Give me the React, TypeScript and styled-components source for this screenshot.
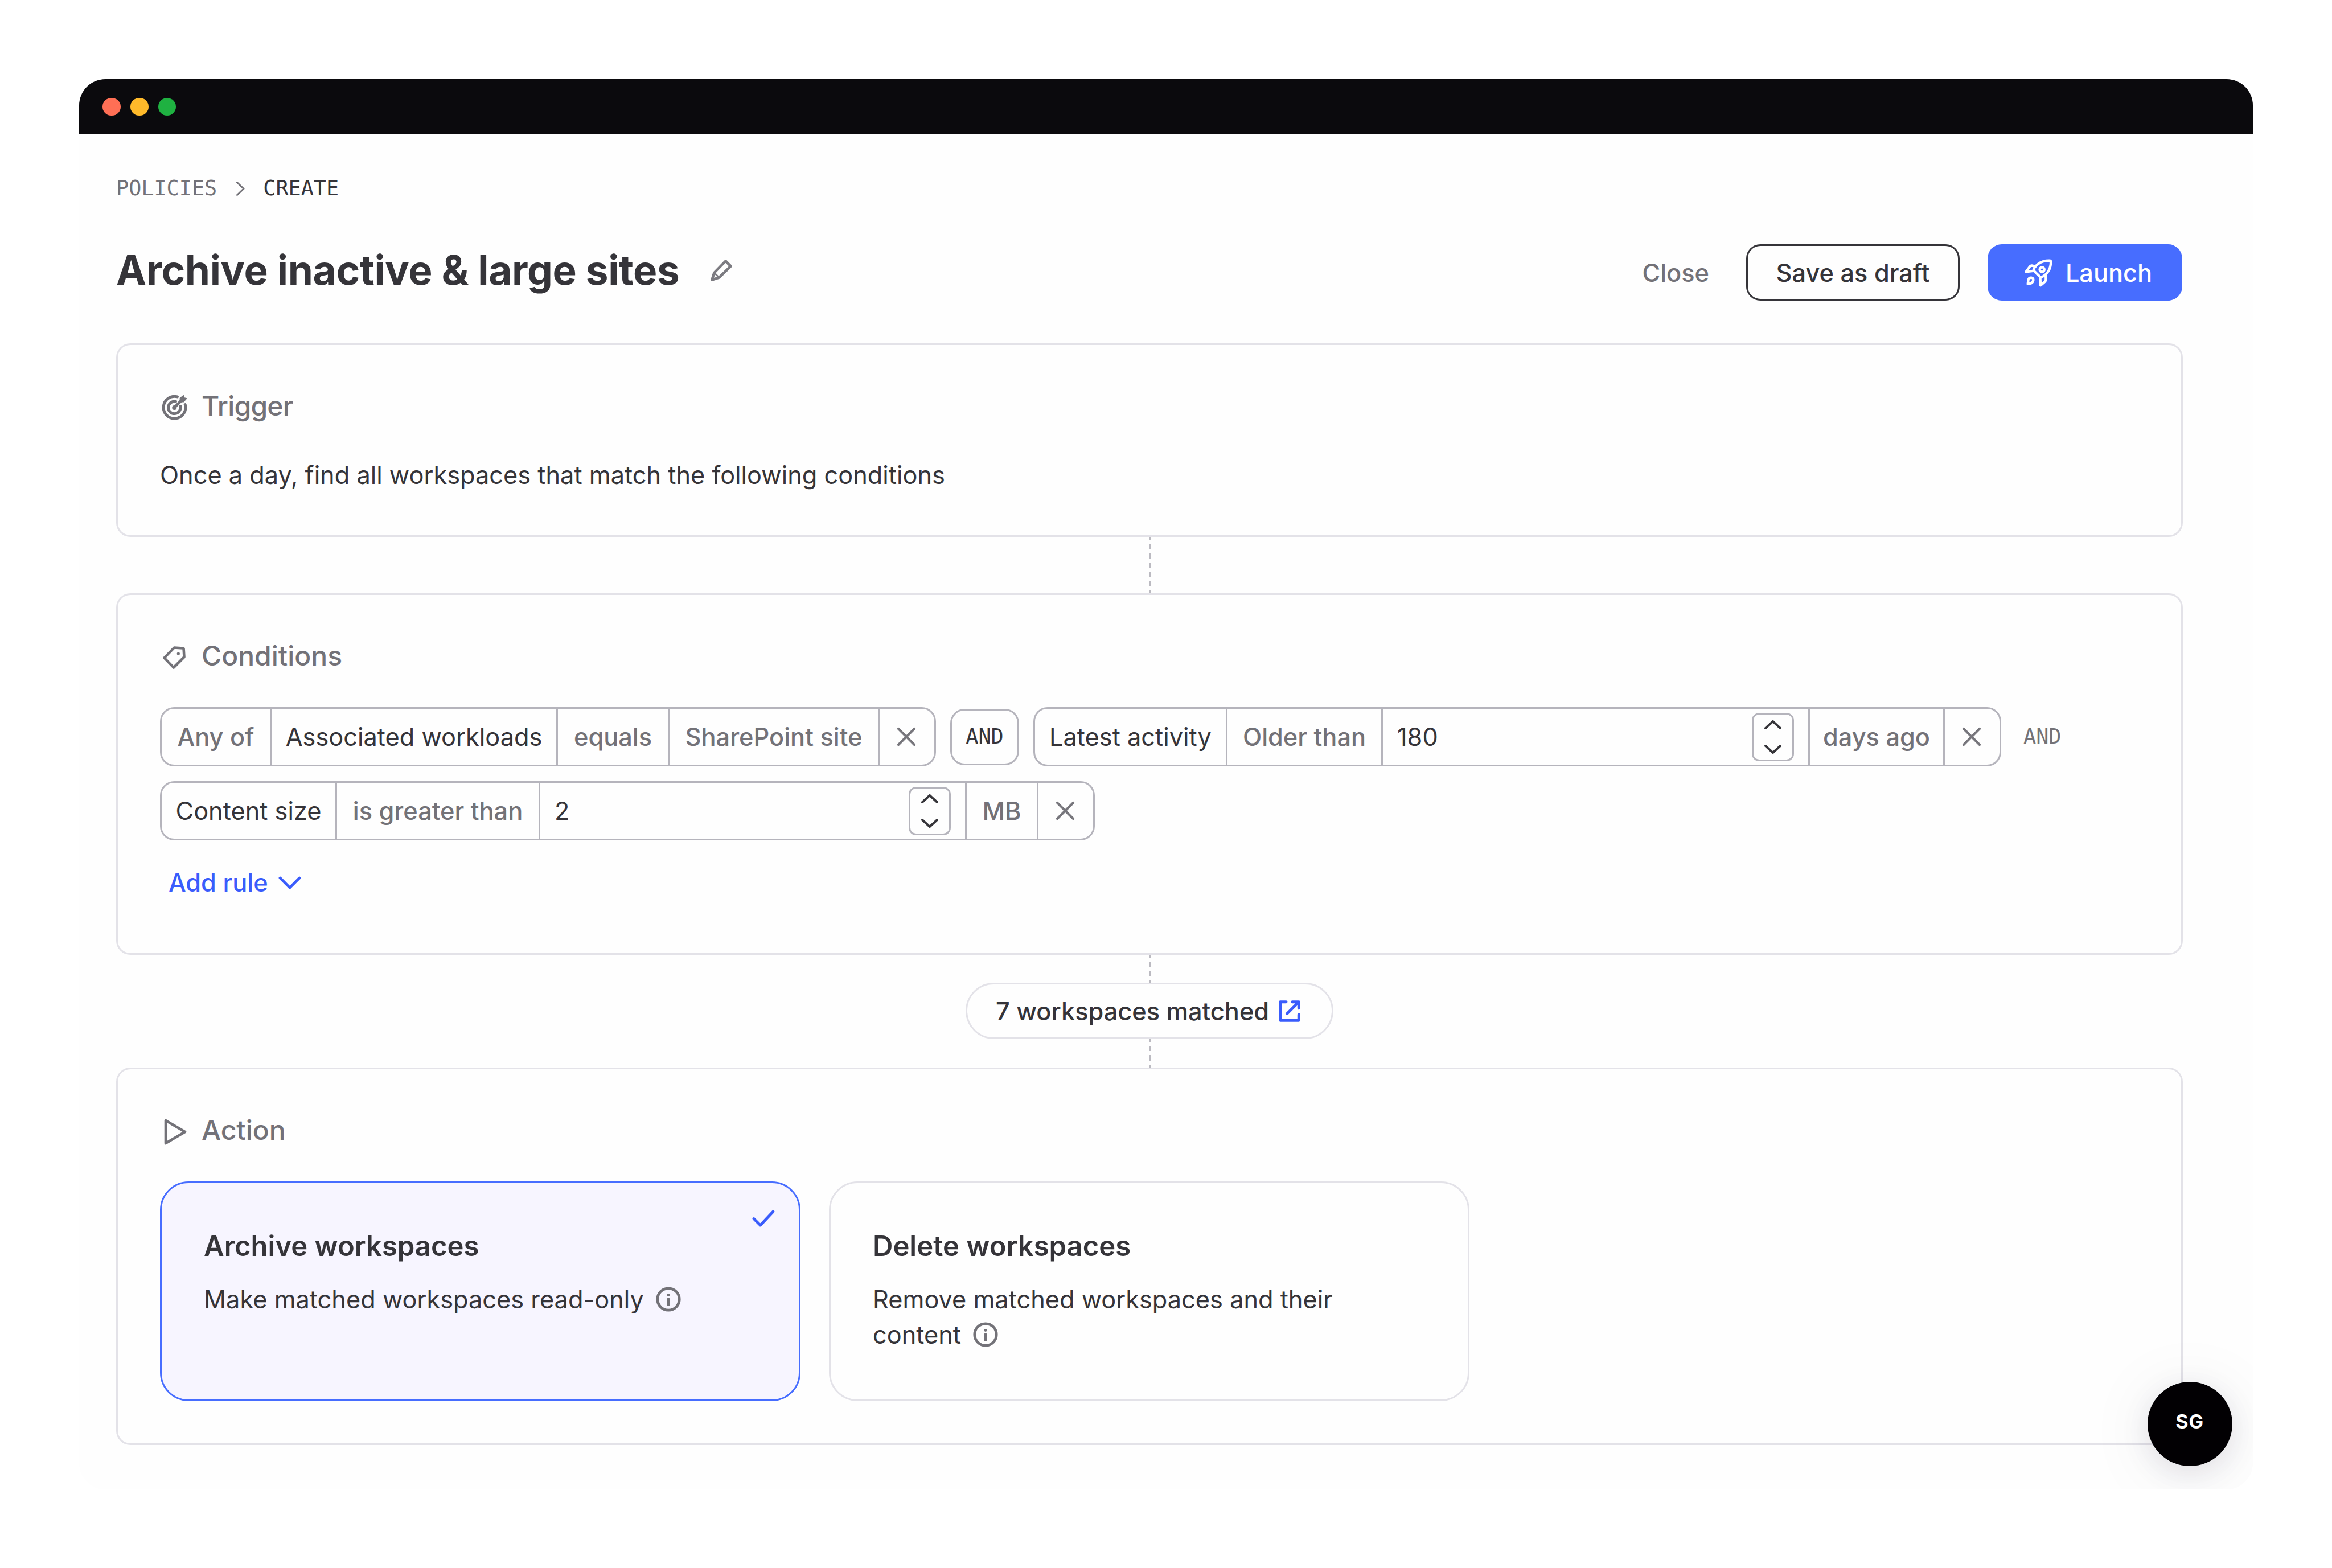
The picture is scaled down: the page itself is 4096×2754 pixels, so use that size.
import React from "react";
import styled, { createGlobalStyle, css } from "styled-components";

const ink = "#353439";
const muted = "#737278";
const blue = "#476dff";
const link = "#3a5cfc";
const line = "#e3e2e8";
const edge = "#b5b4bc";

const GlobalStyle = createGlobalStyle`
  * { box-sizing: border-box; }
  html, body { margin: 0; background: #fff; }
  body {
    font-family: Inter, "Liberation Sans", sans-serif;
    font-size: 43.3px;
    line-height: 62px;
    color: ${ink};
  }
  svg { display: block; flex: none; }
  button { font: inherit; color: inherit; background: none; border: 0; padding: 0; letter-spacing: inherit; }
  h1, h2, h3, p { margin: 0; font-weight: inherit; }
`;

const Stage = styled.div`
  width: 4096px;
  height: 2754px;
  padding: 139px;
  background: #fff;
`;

const Window = styled.div`
  position: relative;
  width: 3818px;
  height: 2477px;
  border-radius: 46px;
  overflow: hidden;
  background: #fefefe;
`;

const TitleBar = styled.div`
  display: flex;
  align-items: center;
  gap: 17.4px;
  height: 97px;
  padding-left: 41.4px;
  background: #0b0a0d;
`;

const Dot = styled.i<{ $color: string }>`
  width: 31.4px;
  height: 31.4px;
  border-radius: 50%;
  background: ${(p) => p.$color};
`;

const Page = styled.main`
  display: flex;
  flex-direction: column;
  width: 3695px;
  padding: 64px 0 0 65px;
`;

const mono = css`
  font-family: "DejaVu Sans Mono", "Liberation Mono", monospace;
  font-size: 36.8px;
`;

const Breadcrumbs = styled.nav`
  ${mono}
  display: flex;
  align-items: center;
  height: 62px;
  color: ${muted};
  svg { margin: 0 32px 0 34px; }
`;

const Current = styled.span`
  color: ${ink};
`;

const Header = styled.header`
  display: flex;
  align-items: center;
  height: 99px;
  margin: 67px 0 75px;
`;

const Title = styled.h1`
  font-size: 71px;
  font-weight: 650;
  letter-spacing: -0.37px;
  line-height: 86px;
  margin-top: -9px;
  white-space: nowrap;
`;

const EditButton = styled.button`
  margin: -7px 0 0 55px;
`;

const Actions = styled.div`
  display: flex;
  margin: 0 1px 0 auto;
  font-weight: 500;
`;

const Button = styled.button<{ $kind: "plain" | "outline" | "primary" }>`
  display: flex;
  align-items: center;
  justify-content: center;
  height: 99px;
  border-radius: 25px;
  white-space: nowrap;
  ${(p) =>
    p.$kind === "plain"
      ? css`color: ${muted}; margin-right: 65px;`
      : p.$kind === "outline"
      ? css`width: 375px; border: 3px solid ${ink}; margin-right: 49px;`
      : css`width: 342px; background: ${blue}; color: #fff; gap: 23px; padding-left: 11px;`}
`;

const Card = styled.section<{ $height: number }>`
  height: ${(p) => p.$height}px;
  padding: 74px;
  border: 3px solid ${line};
  border-radius: 25px;
`;

const CardHeader = styled.h2<{ $tracking?: number }>`
  display: flex;
  align-items: center;
  height: 62px;
  padding-top: 4px;
  margin-bottom: 61px;
  font-size: 48px;
  font-weight: 500;
  letter-spacing: ${(p) => p.$tracking ?? 0}px;
  color: ${muted};
`;

const IconSlot = styled.span`
  display: flex;
  align-items: center;
  justify-content: center;
  width: 50px;
  margin-right: 23px;
  padding-top: 5px;
`;

const Connector = styled.div<{ $length: number }>`
  align-self: center;
  width: 3px;
  height: ${(p) => p.$length}px;
  background: repeating-linear-gradient(
    #bbbac1 0 4.6px,
    transparent 4.6px 11.9px,
    #bbbac1 11.9px 16.5px
  );
`;

const Rules = styled.div`
  display: flex;
  flex-wrap: wrap;
  align-items: center;
  gap: 26px 25px;
`;

const Rule = styled.div`
  display: flex;
  height: 104px;
  border: 3px solid ${edge};
  border-radius: 25px;
`;

const Cell = styled.div<{ $width: number; $strong?: boolean }>`
  display: flex;
  align-items: center;
  justify-content: center;
  width: ${(p) => p.$width}px;
  color: ${(p) => (p.$strong ? ink : muted)};
  font-weight: ${(p) => (p.$strong ? 400 : 500)};
  border-right: 3px solid ${edge};
  white-space: nowrap;
  &:last-child { border-right: 0; padding-right: 3px; }
`;

const NumberCell = styled(Cell)`
  justify-content: space-between;
  padding: 0 25px;
`;

const Stepper = styled.div`
  display: flex;
  flex-direction: column;
  align-items: center;
  justify-content: space-between;
  width: 74px;
  height: 85px;
  padding: 10px 0;
  border: 3px solid ${edge};
  border-radius: 13px;
  color: ${ink};
`;

const Operator = styled.span<{ $boxed?: boolean }>`
  ${mono}
  ${(p) =>
    p.$boxed
      ? css`
          display: flex;
          align-items: center;
          justify-content: center;
          width: 121px;
          height: 99px;
          border: 3px solid ${edge};
          border-radius: 25px;
          color: ${ink};
        `
      : css`
          margin-left: 14px;
          color: ${muted};
        `}
`;

const AddRule = styled.button`
  display: flex;
  align-items: center;
  gap: 18px;
  height: 62px;
  margin: 43px 0 0 15px;
  color: ${link};
  font-weight: 500;
`;

const Matches = styled.a`
  display: flex;
  align-items: center;
  justify-content: center;
  align-self: center;
  gap: 17px;
  width: 646px;
  height: 99px;
  padding-right: 5px;
  border: 3px solid ${line};
  border-radius: 50px;
  font-weight: 500;
  white-space: nowrap;
`;

const Options = styled.div`
  display: flex;
  gap: 50px;
`;

const Option = styled.article<{ $selected?: boolean }>`
  position: relative;
  width: 1125px;
  height: 386px;
  padding: 80px 74px 0;
  border: 3px solid ${(p) => (p.$selected ? blue : line)};
  border-radius: 50px;
  background: ${(p) => (p.$selected ? "#f7f5ff" : "transparent")};
`;

const OptionTitle = styled.h3`
  font-size: 49px;
  font-weight: 600;
  margin-bottom: 31px;
`;

const OptionText = styled.p`
  svg { display: inline-block; vertical-align: middle; margin: -8px 0 0 21px; }
`;

const Tick = styled.span`
  position: absolute;
  top: 46px;
  right: 41px;
`;

const Avatar = styled.div`
  position: absolute;
  right: 36.5px;
  bottom: 41px;
  display: flex;
  align-items: center;
  justify-content: center;
  width: 148.5px;
  height: 148.5px;
  padding-bottom: 8px;
  border-radius: 50%;
  background: #020003;
  color: #fff;
  font-size: 34px;
  font-weight: 700;
  letter-spacing: 1px;
  box-shadow: 0 12px 50px rgba(30, 15, 40, 0.09), 0 12px 120px rgba(30, 15, 60, 0.08);
`;

const Cross = () => (
  <svg width="34" height="34" viewBox="0 0 34 34" fill="none" stroke="#77767c" strokeWidth="4.2" strokeLinecap="round">
    <path d="M3 3L31 31M31 3L3 31" />
  </svg>
);

const Chevron = ({ w, h, d, stroke = 4 }: { w: number; h: number; d: string; stroke?: number }) => (
  <svg width={w} height={h} viewBox={`0 0 ${w} ${h}`} fill="none" stroke="currentColor" strokeWidth={stroke} strokeLinecap="round" strokeLinejoin="round">
    <path d={d} />
  </svg>
);

const Spinner = () => (
  <Stepper>
    <Chevron w={30} h={16} d="M2 14L15 2L28 14" />
    <Chevron w={30} h={16} d="M2 2L15 14L28 2" />
  </Stepper>
);

const Pencil = () => (
  <svg width="38" height="38" viewBox="0 0 38 38" fill="none" stroke="#7c7b81" strokeWidth="4.6" strokeLinejoin="round">
    <path d="M26.5 2.5L35.5 11.5L15 31.5L2.5 35.5L6.5 23Z" />
    <path d="M6.5 23L15 31.5" strokeWidth="3" />
  </svg>
);

const Rocket = () => (
  <svg width="50" height="50" viewBox="50 45 172 172" fill="none" stroke="#fff" strokeWidth="15" strokeLinejoin="round" strokeLinecap="round">
    <path d="M107 117C112 90 150 56 205 58Q212 58 212 65C213 108 190 145 151 160Z" />
    <circle cx="159" cy="112" r="14" />
    <path d="M119 93L97 88Q90 87 85 94L62 125L105 120" />
    <path d="M148 160L150 208L178 184Q184 178 181 148" />
    <path d="M73 199L76 174Q80 160 94 161Q109 163 106 178Q102 193 88 196Z" />
  </svg>
);

const Target = () => (
  <svg width="45" height="45" viewBox="0 0 45 45" fill="none" stroke={muted} strokeWidth="4.9" strokeLinecap="round">
    <path d="M27.5 3.9A19.4 19.4 0 1 0 41.2 17.5" />
    <path d="M24.5 12.2A10.8 10.8 0 1 0 32.9 20.6" />
    <path d="M22.3 22.8L36 9" />
    <circle cx="22.3" cy="23" r="1.6" fill={muted} />
    <path d="M32.6 12.4V6.6L38.2 2L39.2 5.9L43.3 6.9L38.5 12.4Z" fill={muted} strokeWidth="2" strokeLinejoin="round" />
  </svg>
);

const Tag = () => (
  <svg width="42" height="42" viewBox="0 0 42 42" fill="none" stroke={muted} strokeWidth="4.6" strokeLinejoin="round">
    <path d="M21 3.5L36.5 4.5Q37.5 4.6 37.6 5.6L38.5 20L20 38.5L3.5 21.5Z" />
    <circle cx="28.3" cy="14" r="2.6" fill={muted} stroke="none" />
  </svg>
);

const Play = () => (
  <svg width="44" height="46" viewBox="-4 0 44 46" fill="none" stroke={muted} strokeWidth="4.6" strokeLinejoin="round">
    <path d="M3 3L37 23L3 43Z" />
  </svg>
);

const External = () => (
  <svg width="38" height="38" viewBox="0 0 38 38" fill="none" stroke={link} strokeWidth="4.9" strokeLinecap="round" strokeLinejoin="round">
    <path d="M13 2.8H2.8V35.2H35.2V25M24 2.8H35.2V14M35.2 2.8L14.5 23.5" />
  </svg>
);

const Info = () => (
  <svg width="44" height="44" viewBox="0 0 44 44" fill="none" stroke={muted} strokeWidth="4.8" strokeLinecap="round">
    <circle cx="22" cy="22" r="19.2" />
    <path d="M22 22V31.5M22 14.4V14.6" />
  </svg>
);

const Check = () => (
  <svg width="42" height="32" viewBox="0 0 42 32" fill="none" stroke={link} strokeWidth="4.9" strokeLinecap="round" strokeLinejoin="round">
    <path d="M4 16.5L15.5 28L38 4" />
  </svg>
);

export default function App() {
  return (
    <>
      <GlobalStyle />
      <Stage>
        <Window>
          <TitleBar>
            <Dot $color="#ff6f55" />
            <Dot $color="#ffba2a" />
            <Dot $color="#1fb141" />
          </TitleBar>
          <Page>
            <Breadcrumbs>
              <span>POLICIES</span>
              <Chevron w={15} h={25} d="M1.5 1.5L13 12.5L1.5 23.5" stroke={3} />
              <Current>CREATE</Current>
            </Breadcrumbs>
            <Header>
              <Title>Archive inactive &amp; large sites</Title>
              <EditButton><Pencil /></EditButton>
              <Actions>
                <Button $kind="plain">Close</Button>
                <Button $kind="outline">Save as draft</Button>
                <Button $kind="primary"><Rocket />Launch</Button>
              </Actions>
            </Header>

            <Card $height={340}>
              <CardHeader $tracking={-0.8}><IconSlot><Target /></IconSlot>Trigger</CardHeader>
              <p>Once a day, find all workspaces that match the following conditions</p>
            </Card>
            <Connector $length={99} />
            <Card $height={635}>
              <CardHeader><IconSlot><Tag /></IconSlot>Conditions</CardHeader>
              <Rules>
                <Rule>
                  <Cell $width={193}>Any of</Cell>
                  <Cell $width={503} $strong>Associated workloads</Cell>
                  <Cell $width={196}>equals</Cell>
                  <Cell $width={369}>SharePoint site</Cell>
                  <Cell $width={96}><Cross /></Cell>
                </Rule>
                <Operator $boxed>AND</Operator>
                <Rule>
                  <Cell $width={338} $strong>Latest activity</Cell>
                  <Cell $width={273}>Older than</Cell>
                  <NumberCell $width={750} $strong>180<Spinner /></NumberCell>
                  <Cell $width={237}>days ago</Cell>
                  <Cell $width={96}><Cross /></Cell>
                </Rule>
                <Operator>AND</Operator>
                <Rule>
                  <Cell $width={308} $strong>Content size</Cell>
                  <Cell $width={357}>is greater than</Cell>
                  <NumberCell $width={749} $strong>2<Spinner /></NumberCell>
                  <Cell $width={126}>MB</Cell>
                  <Cell $width={96}><Cross /></Cell>
                </Rule>
              </Rules>
              <AddRule>Add rule<Chevron w={40} h={23} d="M3 3L20 20L37 3" stroke={4.7} /></AddRule>
            </Card>
            <Connector $length={49} />
            <Matches>7 workspaces matched<External /></Matches>
            <Connector $length={50} />
            <Card $height={663}>
              <CardHeader><IconSlot><Play /></IconSlot>Action</CardHeader>
              <Options>
                <Option $selected>
                  <OptionTitle>Archive workspaces</OptionTitle>
                  <OptionText>Make matched workspaces read-only<Info /></OptionText>
                  <Tick><Check /></Tick>
                </Option>
                <Option>
                  <OptionTitle>Delete workspaces</OptionTitle>
                  <OptionText>Remove matched workspaces and their content<Info /></OptionText>
                </Option>
              </Options>
            </Card>
          </Page>
          <Avatar>SG</Avatar>
        </Window>
      </Stage>
    </>
  );
}
